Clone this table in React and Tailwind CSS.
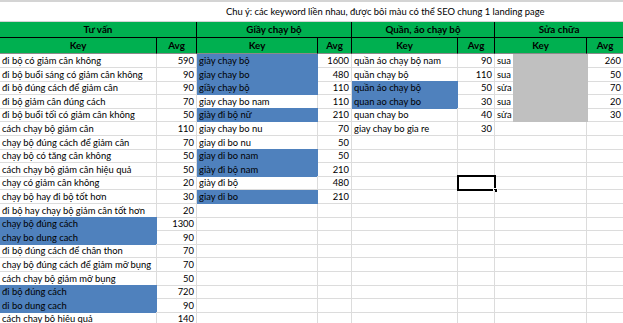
import React from "react";

const tuvan = [
  ["đi bộ có giảm cân không", 590, false],
  ["đi bộ buổi sáng có giảm cân không", 90, false],
  ["đi bộ đúng cách để giảm cân", 90, false],
  ["đi bộ giảm cân đúng cách", 70, false],
  ["đi bộ buổi tối có giảm cân không", 50, false],
  ["cách chạy bộ giảm cân", 110, false],
  ["chạy bộ đúng cách để giảm cân", 70, false],
  ["chạy bộ có tăng cân không", 50, false],
  ["cách chạy bộ giảm cân hiệu quả", 50, false],
  ["chạy có giảm cân không", 20, false],
  ["chạy bộ hay đi bộ tốt hơn", 30, false],
  ["đi bộ hay chạy bộ giảm cân tốt hơn", 20, false],
  ["chạy bộ đúng cách", 1300, true],
  ["chay bo dung cach", 90, true],
  ["đi bộ đúng cách để chân thon", 70, false],
  ["chạy bộ đúng cách để giảm mỡ bụng", 70, false],
  ["cách chạy bộ giảm mỡ bụng", 50, false],
  ["đi bộ đúng cách", 720, true],
  ["di bo dung cach", 90, true],
  ["cách chạy bộ hiệu quả", 140, false],
];

const giay = [
  ["giày chạy bộ", 1600, true],
  ["giay chay bo", 480, true],
  ["giầy chạy bộ", 110, true],
  ["giay chay bo nam", 110, false],
  ["giày đi bộ nữ", 210, true],
  ["giay chay bo nu", 70, false],
  ["giay di bo nu", 50, false],
  ["giay di bo nam", 50, true],
  ["giày đi bộ nam", 210, true],
  ["giày đi bộ", 480, false],
  ["giay di bo", 210, true],
];

const quan = [
  ["quần áo chạy bộ nam", 90, false],
  ["quần chạy bộ", 110, false],
  ["quần áo chạy bộ", 50, true],
  ["quan ao chay bo", 30, true],
  ["quan chay bo", 40, false],
  ["giay chay bo gia re", 30, false],
];

const sua = [
  ["sua", 260],
  ["sua", 50],
  ["sửa", 70],
  ["sua", 20],
  ["sửa", 30],
];

const ROWS = 20;
const font = { fontFamily: "Lato, 'Liberation Sans', sans-serif" };

function KeyCell({ item }) {
  if (!item)
    return <div className="h-full border-r border-b border-[#dcdcdc]" />;
  const blue = item[2];
  return (
    <div
      className={
        blue
          ? "h-full pl-[2px] bg-[#4f81bd] border-r border-b border-[#4f81bd] whitespace-nowrap overflow-visible leading-[13px]"
          : "h-full pl-[2px] border-r border-b border-[#dcdcdc] whitespace-nowrap overflow-visible leading-[13px]"
      }
    >
      {item[0]}
    </div>
  );
}

function NumCell({ value, last }) {
  return (
    <div
      className={
        "h-full pr-[2px] text-right border-b border-[#dcdcdc] leading-[13px] " +
        (last ? "" : "border-r")
      }
    >
      {value ?? ""}
    </div>
  );
}

export default function App() {
  return (
    <div
      className="w-[623px] h-[323px] overflow-hidden bg-white text-[9.4px] text-black"
      style={font}
    >
      <div className="h-[2px] bg-[#d4d4d4]" />
      <div className="grid grid-cols-[157px_40px_121px_34px_106px_37px_92px_36px]">
        <div className="col-span-8 h-[20px] border-b border-[#d4d4d4] pl-[226px] leading-[19px] whitespace-nowrap">
          Chu ý: các keyword liền nhau, được bôi màu có thể SEO chung 1 landing page
        </div>
        {["Tư vấn", "Giầy chạy bộ", "Quần, áo chạy bộ", "Sửa chữa"].map((t, i) => (
          <div
            key={t}
            className={
              "col-span-2 h-[16px] bg-[#00b050] border-b border-black font-bold text-[9.8px] text-center leading-[15px] " +
              (i < 3 ? "border-r" : "")
            }
          >
            {t}
          </div>
        ))}
        {[0, 1, 2, 3].map((i) => (
          <React.Fragment key={i}>
            <div className="h-[16px] bg-[#00b050] border-r border-b border-black border-b-[#8a8a8a] font-bold text-[9.8px] text-center leading-[15px]">
              Key
            </div>
            <div
              className={
                "h-[16px] bg-[#00b050] border-b border-black border-b-[#8a8a8a] font-bold text-[9.8px] text-center leading-[15px] " +
                (i < 3 ? "border-r" : "")
              }
            >
              Avg
            </div>
          </React.Fragment>
        ))}
      </div>
      <div className="relative">
        {Array.from({ length: ROWS }).map((_, r) => (
          <div
            key={r}
            className="grid grid-cols-[157px_40px_121px_34px_106px_37px_92px_36px] h-[13.6px]"
          >
            <KeyCell item={tuvan[r]} />
            <NumCell value={tuvan[r]?.[1]} />
            <KeyCell item={giay[r]} />
            <NumCell value={giay[r]?.[1]} />
            <KeyCell item={quan[r]} />
            <div className="relative h-full">
              <NumCell value={quan[r]?.[1]} />
              {r === 9 && (
                <div className="absolute -left-px -top-px -right-px -bottom-px border-2 border-black">
                  <div className="absolute -right-[4px] -bottom-[4px] w-[5px] h-[5px] bg-black border border-white" />
                </div>
              )}
            </div>
            <KeyCell item={sua[r] ? [sua[r][0], 0, false] : null} />
            <NumCell value={sua[r]?.[1]} last />
          </div>
        ))}
        <div className="absolute left-[513px] top-0 w-[75px] h-[68px] bg-[#c0c0c0]" />
      </div>
    </div>
  );
}
